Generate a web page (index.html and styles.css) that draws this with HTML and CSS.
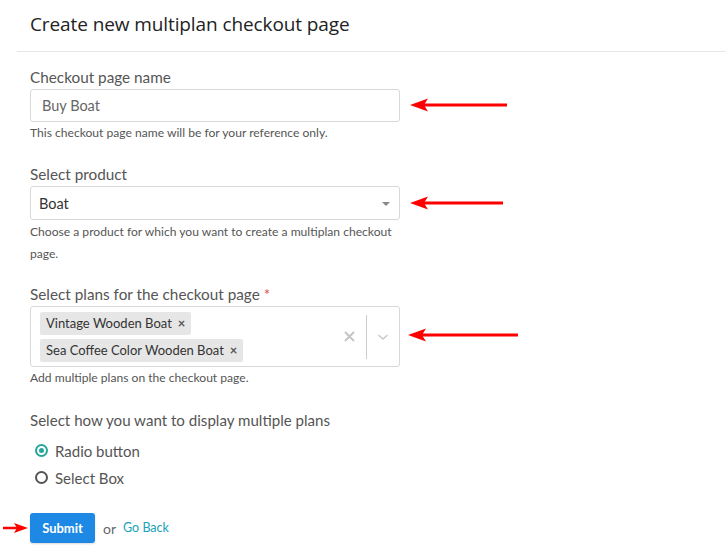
FILE: index.html
```html
<!DOCTYPE html>
<html>
<head>
<meta charset="utf-8">
<link rel="stylesheet" href="styles.css">
</head>
<body>
<div class="page">
  <div class="header"><h1 class="title">Create new multiplan checkout page</h1></div>
  <form class="form">
    <div class="group g1">
      <label class="label">Checkout page name</label>
      <div class="row">
        <div class="input"><span class="input-text">Buy Boat</span></div>
        <svg class="arrow a1" width="100" height="14" viewBox="0 0 100 14"><polygon points="0,7 18,0.5 14,7 18,13.5" fill="#f00"/><line x1="12" y1="7" x2="97" y2="7" stroke="#f00" stroke-width="3"/></svg>
      </div>
      <div class="help">This checkout page name will be for your reference only.</div>
    </div>

    <div class="group g2">
      <label class="label">Select product</label>
      <div class="row">
        <div class="input select"><span class="select-text">Boat</span><span class="caret"></span></div>
        <svg class="arrow a2" width="96" height="14" viewBox="0 0 96 14"><polygon points="0,7 18,0.5 14,7 18,13.5" fill="#f00"/><line x1="12" y1="7" x2="93" y2="7" stroke="#f00" stroke-width="3"/></svg>
      </div>
      <div class="help help2">Choose a product for which you want to create a multiplan checkout page.</div>
    </div>

    <div class="group g3">
      <label class="label">Select plans for the checkout page <span class="req">*</span></label>
      <div class="row">
        <div class="multi">
          <div class="tags">
            <span class="tag">Vintage Wooden Boat <span class="tag-x">×</span></span>
            <span class="tag">Sea Coffee Color Wooden Boat <span class="tag-x">×</span></span>
          </div>
          <div class="indicators">
            <svg class="clear" width="11" height="11" viewBox="0 0 11 11"><path d="M1 1L10 10M10 1L1 10" stroke="#c4c4c4" stroke-width="1.8"/></svg>
            <span class="sep"></span>
            <svg class="chev" width="12" height="8" viewBox="0 0 12 8"><path d="M1.5 2L6 6L10.5 2" fill="none" stroke="#c8c8c8" stroke-width="1.4"/></svg>
          </div>
        </div>
        <svg class="arrow a3" width="112" height="14" viewBox="0 0 112 14"><polygon points="0,7 18,0.5 14,7 18,13.5" fill="#f00"/><line x1="12" y1="7" x2="110" y2="7" stroke="#f00" stroke-width="3"/></svg>
      </div>
      <div class="help">Add multiple plans on the checkout page.</div>
    </div>

    <div class="group g4">
      <label class="label label4">Select how you want to display multiple plans</label>
      <div class="radio"><span class="dot on"></span>Radio button</div>
      <div class="radio"><span class="dot"></span>Select Box</div>
    </div>

    <div class="actions">
      <svg class="arrow a4" width="26" height="12" viewBox="0 0 26 12"><line x1="0" y1="6" x2="14" y2="6" stroke="#f00" stroke-width="2.5"/><polygon points="25,6 11,1 14,6 11,11" fill="#f00"/></svg>
      <button type="button" class="btn">Submit</button>
      <span class="or">or</span>
      <a class="back">Go Back</a>
    </div>
  </form>
</div>
</body>
</html>
```

FILE: styles.css
```css
* { box-sizing: border-box; }
body {
  margin: 0;
  background: #fff;
  font-family: Lato, "Liberation Sans", sans-serif;
  color: #555;
}
.page { width: 726px; height: 554px; overflow: hidden; }
.header {
  margin-left: 17px;
  padding-left: 13px;
  height: 52px;
  border-bottom: 1px solid #e6e6e6;
}
.title {
  margin: 0;
  padding-top: 12px;
  font-family: "Open Sans", "Liberation Sans", sans-serif;
  font-weight: 400;
  font-size: 19px;
  letter-spacing: -0.1px;
  line-height: 24px;
  color: #222;
}
.form { padding-left: 30px; }
.group { display: flex; flex-direction: column; }
.g1 { margin-top: 16px; }
.g2 { margin-top: 21px; }
.g3 { margin-top: 20px; }
.g4 { margin-top: 22px; }
.label {
  font-size: 15.3px;
  line-height: 19px;
  color: #555;
  margin-bottom: 2px;
}
.label4 { font-size: 15.1px; margin-bottom: 7px; }
.req { color: #d9534f; }
.row { display: flex; align-items: center; }
.input {
  width: 370px;
  height: 33px;
  border: 1px solid #d8d8d8;
  border-radius: 3px;
  display: flex;
  align-items: center;
  padding-left: 11px;
}
.input-text { font-size: 14.5px; color: #666; }
.select { height: 34px; padding-left: 8px; justify-content: space-between; padding-right: 9px; }
.select-text { font-size: 14.5px; color: #333; }
.caret {
  width: 0; height: 0;
  border-left: 4px solid transparent;
  border-right: 4px solid transparent;
  border-top: 4px solid #888;
  margin-top: 2px;
}
.arrow { display: block; margin-left: 10px; }
.a1 { margin-bottom: 2px; }
.a3 { margin-left: 8px; margin-bottom: 4px; }
.help {
  font-size: 12.1px;
  line-height: 22px;
  color: #555;
  margin-top: 0;
}
.help2 { width: 370px; margin-top: 1px; }
.multi {
  width: 370px;
  height: 61px;
  border: 1px solid #d8d8d8;
  border-radius: 3px;
  display: flex;
  align-items: center;
  padding-left: 9px;
}
.tags {
  flex: 1;
  display: flex;
  flex-direction: column;
  align-items: flex-start;
  gap: 4px;
}
.tag {
  background: #e6e6e6;
  border-radius: 2px;
  height: 23px;
  display: flex;
  align-items: center;
  padding: 0 6px 0 6px;
  font-size: 13px;
  color: #333;
}
.tag-x { font-size: 13px; margin-left: 6px; color: #555; font-weight: 700; }
.indicators { display: flex; align-items: center; height: 100%; }
.clear { margin-right: 11px; }
.sep { width: 1px; height: 44px; background: #ccc; }
.chev { margin: 0 10px 0 10px; }
.radio {
  display: flex;
  align-items: center;
  font-size: 15px;
  color: #555;
  height: 27px;
  padding-left: 5px;
}
.dot {
  width: 13px; height: 13px;
  border: 2px solid #555;
  border-radius: 50%;
  margin-right: 7px;
  position: relative;
}
.dot.on { border-color: #26a69a; }
.dot.on::after {
  content: "";
  position: absolute;
  left: 2px; top: 2px;
  width: 5px; height: 5px;
  border-radius: 50%;
  background: #26a69a;
}
.actions {
  display: flex;
  align-items: center;
  margin-top: 22px;
  margin-left: -27px;
}
.a4 { margin-left: 0; margin-right: 1px; }
.btn {
  width: 65px;
  height: 30px;
  background: #1e88e5;
  border: none;
  border-radius: 3px;
  color: #fff;
  font-family: Lato, "Liberation Sans", sans-serif;
  font-weight: 700;
  font-size: 13px;
  box-shadow: 0 1px 2px rgba(0,0,0,0.15);
}
.or { margin-left: 8px; font-size: 14px; color: #666; }
.back { margin-left: 7px; font-size: 12.5px; color: #17a2b8; margin-top: -1px; }
```
